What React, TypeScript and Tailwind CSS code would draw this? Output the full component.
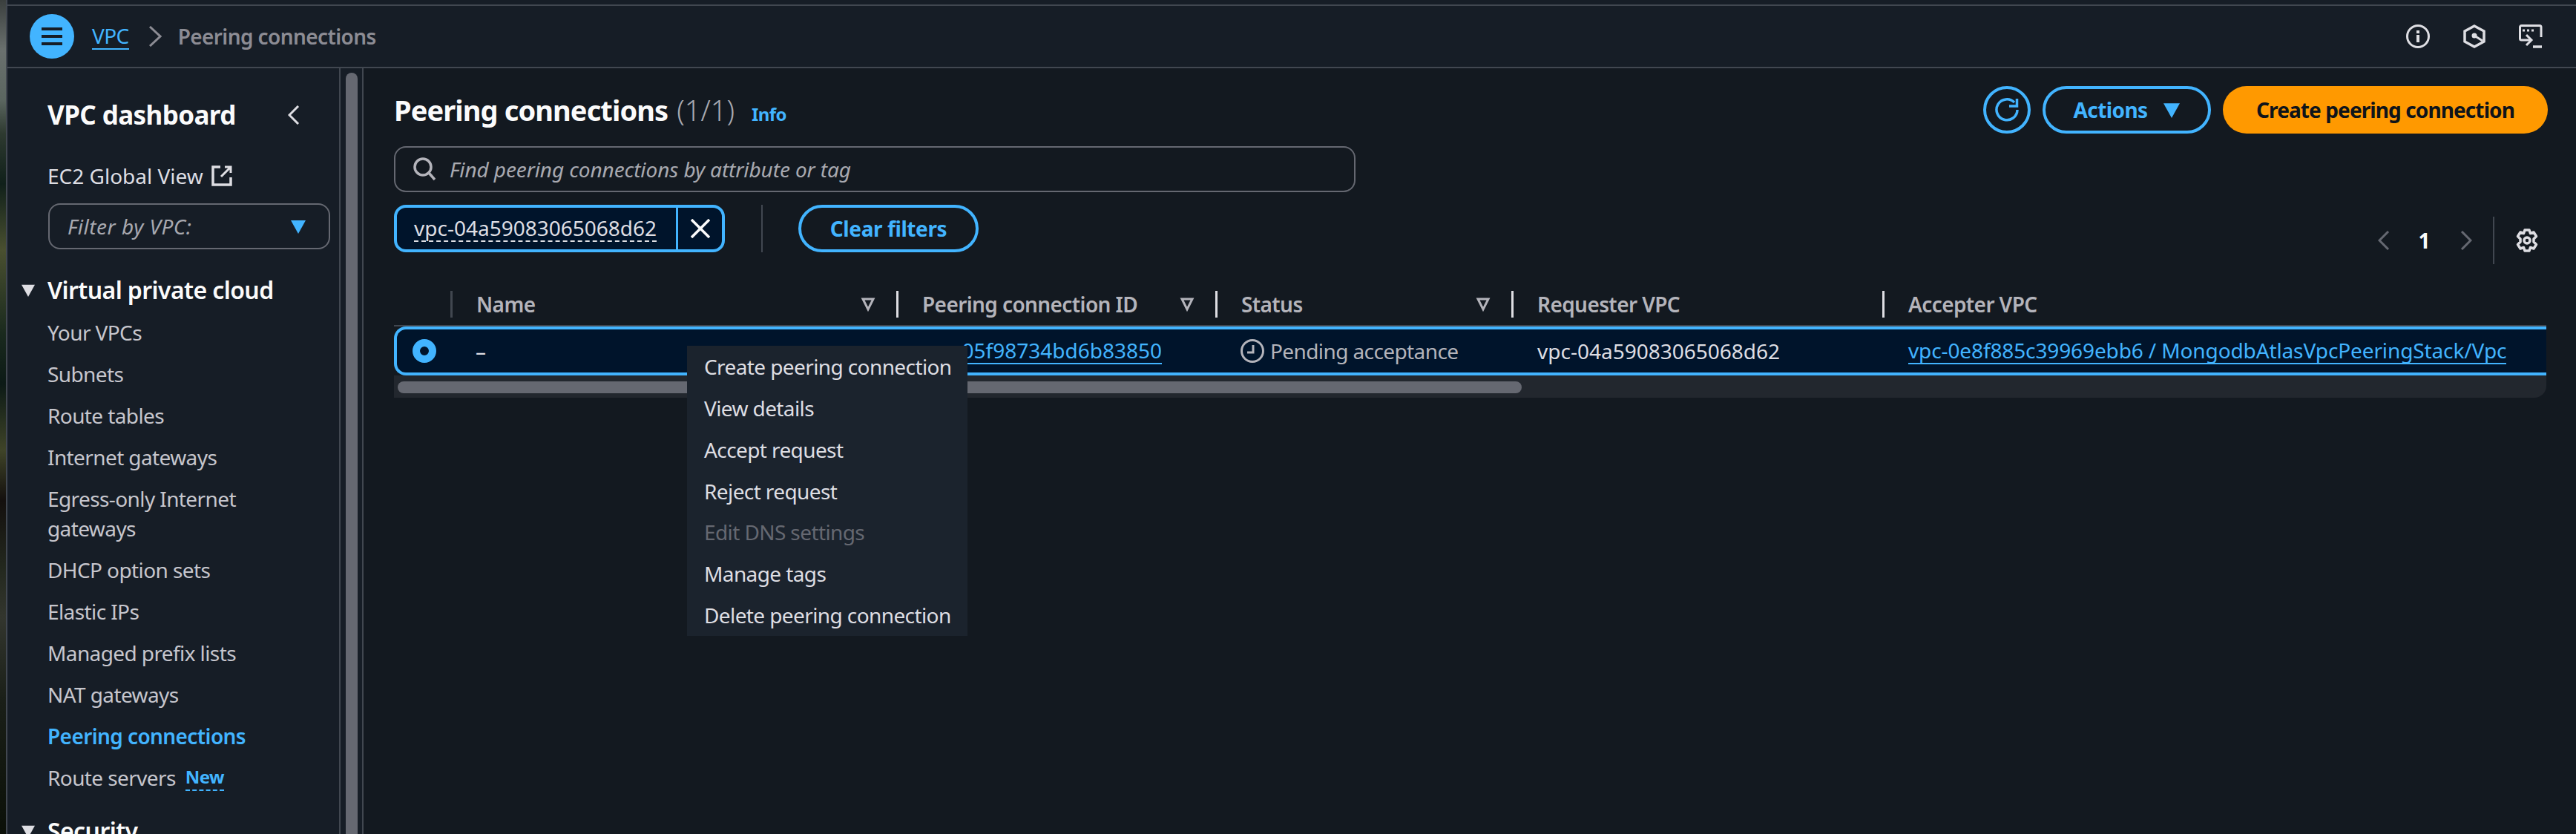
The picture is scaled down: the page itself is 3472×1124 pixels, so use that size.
const navItems = [
  "Your VPCs",
  "Subnets",
  "Route tables",
  "Internet gateways",
  "Egress-only Internet gateways",
  "DHCP option sets",
  "Elastic IPs",
  "Managed prefix lists",
  "NAT gateways",
];

const menuItems = [
  "Create peering connection",
  "View details",
  "Accept request",
  "Reject request",
  "Edit DNS settings",
  "Manage tags",
  "Delete peering connection",
];

function Caret({ className }: { className: string }) {
  return (
    <svg viewBox="0 0 20 20" className={className} fill="currentColor">
      <polygon points="0,2 20,2 10,20" />
    </svg>
  );
}

function FilterCaret() {
  return (
    <svg viewBox="0 0 20 22" className="h-[22px] w-[20px] text-[#b4b4bb]" fill="none" stroke="currentColor" strokeWidth="3">
      <polygon points="3,4 17,4 10,18" />
    </svg>
  );
}

function HeaderCell({ label, filter, bright }: { label?: string; filter?: boolean; bright?: boolean }) {
  return (
    <div className="flex h-[36px] items-center">
      <div className={`h-full ${bright ? "w-[3px] bg-[#dedee3]" : "w-[3px] bg-[#414750]"}`} />
      <span className="ml-[32px] flex-1 text-[28px] font-semibold text-[#b4b4bb]">{label}</span>
      {filter && (
        <div className="mr-[28px]">
          <FilterCaret />
        </div>
      )}
    </div>
  );
}

export default function App() {
  return (
    <div className="flex h-[1124px] w-[3472px] overflow-hidden bg-[#131920] font-['Noto_Sans',sans-serif] text-[28px] tracking-[-0.6px]">
      {/* desktop wallpaper peeking through at the window edge */}
      <div className="h-full w-[8px] shrink-0 bg-[linear-gradient(180deg,#3a3f3e_0%,#6a706e_6%,#5b6660_12%,#2e3a30_16%,#10201a_22%,#4a5030_30%,#1a2a1e_40%,#0c1a16_46%,#3f4428_54%,#14100e_60%,#23281e_68%,#33362e_74%,#1a1f18_84%,#0b1008_100%)]" />

      <div className="flex min-w-0 flex-1 flex-col border-l-2 border-[#414750]">
        <div className="h-[8px] shrink-0 border-b-2 border-[#414750] bg-[#161d26]" />

        {/* top bar */}
        <header className="flex h-[84px] shrink-0 items-center border-b-2 border-[#414750] bg-[#161d26] pl-[30px] pr-[45px]">
          <div className="flex h-[60px] w-[60px] items-center justify-center rounded-full bg-[#42b4ff]">
            <svg viewBox="0 0 28 24" className="h-[24px] w-[28px]" stroke="#161d26" strokeWidth="4">
              <path d="M0 2h28M0 12h28M0 22h28" />
            </svg>
          </div>
          <a className="ml-[24px] border-b-2 border-[#42b4ff] leading-[34px] text-[#42b4ff]">VPC</a>
          <svg viewBox="0 0 18 28" className="ml-[26px] h-[28px] w-[18px]" fill="none" stroke="#8c8c94" strokeWidth="3">
            <path d="M2 1l14 13L2 27" />
          </svg>
          <span className="ml-[22px] font-semibold text-[#8c8c94]">Peering connections</span>
          <div className="ml-auto flex items-center gap-[44px] text-[#dedee3]">
            <svg viewBox="0 0 32 32" className="h-[32px] w-[32px]" fill="none" stroke="currentColor" strokeWidth="3">
              <circle cx="16" cy="16" r="14.5" />
              <path d="M16 14v10" strokeWidth="4" />
              <path d="M16 8v4" strokeWidth="4" />
            </svg>
            <svg viewBox="0 0 32 32" className="h-[32px] w-[32px]" fill="none" stroke="currentColor" strokeWidth="3.5">
              <polygon points="16,2 29,9 29,23 16,30 3,23 3,9" />
              <circle cx="16" cy="15" r="3.5" fill="currentColor" stroke="none" />
              <path d="M16 15l11 7" strokeWidth="3" />
            </svg>
            <svg viewBox="0 0 32 32" className="h-[32px] w-[32px]" fill="none" stroke="currentColor" strokeWidth="3">
              <path d="M30 17V3.500a2 2 0 0 0-2-2H3.500a2 2 0 0 0-2 2V19a2 2 0 0 0 2 2H16" />
              <path d="M10 14l7 7-7 7" />
              <path d="M5 8h3M11 8h3M17 8h3" />
              <path d="M19 30h12" strokeWidth="3.500" />
            </svg>
          </div>
        </header>

        <div className="flex min-h-0 flex-1">
          {/* side navigation */}
          <aside className="relative h-[1100px] w-[449px] shrink-0 border-r-2 border-[#414750] bg-[#161d26] text-[#c6c6cd]">
            <div className="flex items-center pl-[54px] pr-[53px] pt-[41px]">
              <h2 className="flex-1 text-[35px] font-bold leading-[44px] text-[#fbfbfb]">VPC dashboard</h2>
              <svg viewBox="0 0 16 26" className="h-[26px] w-[16px]" fill="none" stroke="#dedee3" strokeWidth="3">
                <path d="M14 1L2 13l12 12" />
              </svg>
            </div>
            <div className="ml-[54px] mt-[40px] flex items-center gap-[11px] tracking-normal text-[#dedee3]">
              <span className="leading-[40px]">EC2 Global View</span>
              <svg viewBox="0 0 28 28" className="h-[28px] w-[28px]" fill="none" stroke="currentColor" strokeWidth="3.5">
                <path d="M12 2H2v24h24V16" />
                <path d="M18 2h8v8M26 2L13 15" strokeWidth="3" />
              </svg>
            </div>
            <div className="ml-[55px] mt-[17px] flex h-[62px] w-[380px] items-center justify-between rounded-[16px] border-2 border-[#656871] pl-[24px] pr-[31px]">
              <span className="italic tracking-[0.5px] text-[#a8a9b0]">Filter by VPC:</span>
              <Caret className="h-[22px] w-[20px] text-[#42b4ff]" />
            </div>
            <div className="relative ml-[54px] mt-[35px] flex items-center text-[32px] font-semibold leading-[40px] text-[#fbfbfb]">
              <Caret className="absolute -left-[36px] top-[11px] h-[18px] w-[20px] text-[#dedee3]" />
              Virtual private cloud
            </div>
            <nav className="ml-[54px] mt-[17px] flex w-[300px] flex-col gap-[16px] leading-[40px]">
              {navItems.map((item) => (
                <a key={item}>{item}</a>
              ))}
              <a className="font-semibold text-[#42b4ff]">Peering connections</a>
              <div className="flex items-center whitespace-nowrap">
                Route servers
                <span className="ml-[13px] border-b-2 border-dashed border-[#42b4ff] text-[24px] font-bold leading-[34px] text-[#42b4ff]">New</span>
              </div>
            </nav>
            <div className="relative ml-[54px] mt-[32px] flex items-center text-[32px] font-semibold leading-[40px] text-[#fbfbfb]">
              <Caret className="absolute -left-[36px] top-[11px] h-[18px] w-[20px] text-[#dedee3]" />
              Security
            </div>
          </aside>

          {/* scroll rail */}
          <div className="w-[29px] shrink-0 bg-[#161d26] pl-[7px] pt-[6px]">
            <div className="h-full w-[16px] rounded-t-[8px] bg-[#656871]" />
          </div>

          {/* content */}
          <main className="min-w-0 flex-1 border-l-2 border-[#414750] pl-[41px] pr-[38px] pt-[24px]">
            <div className="flex h-[64px] items-center justify-between">
              <div className="flex items-baseline">
                <h1 className="text-[38px] font-bold tracking-[-0.9px] text-[#fbfbfb]">Peering connections</h1>
                <span className="ml-[12px] text-[38px] font-light tracking-normal text-[#a8a9b0]">(1/1)</span>
                <span className="ml-[23px] text-[24px] font-bold text-[#42b4ff]">Info</span>
              </div>
              <div className="flex gap-[16px] font-bold">
                <div className="flex h-[64px] w-[64px] items-center justify-center rounded-full border-[4px] border-[#42b4ff]">
                  <svg viewBox="0 0 32 32" className="h-[32px] w-[32px]" fill="none" stroke="#42b4ff" strokeWidth="3.5">
                    <path d="M26 6A14 14 0 1 0 30 16" />
                    <path d="M29.500 1v10H19" />
                  </svg>
                </div>
                <button className="flex h-[64px] w-[227px] items-center justify-center gap-[22px] rounded-full border-[4px] border-[#42b4ff] text-[#42b4ff]">
                  Actions
                  <Caret className="h-[24px] w-[22px]" />
                </button>
                <button className="h-[64px] w-[438px] rounded-full bg-[#ff9900] tracking-[-0.9px] text-[#0f141a]">Create peering connection</button>
              </div>
            </div>

            <div className="mt-[17px] flex h-[62px] w-[1296px] items-center rounded-[16px] border-2 border-[#656871] pl-[24px]">
              <svg viewBox="0 0 30 32" className="h-[32px] w-[30px]" fill="none" stroke="#b4b4bb" strokeWidth="3.5">
                <circle cx="13" cy="13" r="11" />
                <path d="M21 21l8 9" />
              </svg>
              <span className="ml-[19px] italic tracking-[-0.1px] text-[#a8a9b0]">Find peering connections by attribute or tag</span>
            </div>

            <div className="mt-[17px] flex h-[80px] items-start">
              <div className="flex h-[64px] w-[446px] items-stretch rounded-[16px] border-[4px] border-[#42b4ff] bg-[#00142b]">
                <span className="flex flex-1 items-center pl-[23px]">
                  <span className="border-b-2 border-dashed border-[#dedee3] leading-[34px] tracking-normal text-[#dedee3]">vpc-04a59083065068d62</span>
                </span>
                <div className="flex w-[62px] items-center justify-center border-l-[3px] border-[#42b4ff]">
                  <svg viewBox="0 0 26 26" className="h-[26px] w-[26px]" stroke="#fbfbfb" strokeWidth="3.5">
                    <path d="M1 1l24 24M25 1L1 25" />
                  </svg>
                </div>
              </div>
              <div className="ml-[49px] h-[64px] w-[2px] bg-[#414750]" />
              <button className="ml-[48px] h-[64px] w-[243px] rounded-full border-[4px] border-[#42b4ff] font-bold tracking-[-0.4px] text-[#42b4ff]">Clear filters</button>
              <div className="ml-auto mt-[16px] flex h-[64px] items-center pr-[12px]">
                <svg viewBox="0 0 16 26" className="h-[26px] w-[16px]" fill="none" stroke="#656871" strokeWidth="3">
                  <path d="M14 1L2 13l12 12" />
                </svg>
                <span className="ml-[39px] font-bold text-[#fbfbfb]">1</span>
                <svg viewBox="0 0 16 26" className="ml-[41px] h-[26px] w-[16px]" fill="none" stroke="#656871" strokeWidth="3">
                  <path d="M2 1l12 12L2 25" />
                </svg>
                <div className="ml-[28px] h-[64px] w-[2px] bg-[#414750]" />
                <svg viewBox="0 0 32 32" className="ml-[28px] h-[32px] w-[32px]" fill="none" stroke="#dedee3" strokeWidth="3.5">
                  <path d="M13 2h6l1.5 4.5 4.5-1.5 3.5 5.5L25 14v4l3.5 3.5L25 27l-4.5-1.5L19 30h-6l-1.5-4.5L7 27l-3.5-5.5L7 18v-4L3.5 10.500 7 5l4.500 1.500z" strokeLinejoin="round" />
                  <circle cx="16" cy="16" r="4" />
                </svg>
              </div>
            </div>

            {/* table */}
            <div className="mt-[36px] grid grid-cols-[77px_600px_430px_399px_500px_1fr]">
              <div />
              <div className="-ml-px"><HeaderCell label="Name" filter /></div>
              <HeaderCell label="Peering connection ID" filter bright />
              <HeaderCell label="Status" filter bright />
              <HeaderCell label="Requester VPC" bright />
              <HeaderCell label="Accepter VPC" bright />
            </div>
            <div className="relative mt-[10px] w-[2901px]">
              <div className="h-[2px] bg-[#414750]" />
              <div className="grid h-[66px] grid-cols-[73px_600px_430px_399px_500px_1fr] items-center rounded-l-[16px] border-y-[4px] border-l-[4px] border-[#42b4ff] bg-[#00142b]">
                <div className="pl-[21px]">
                  <div className="h-[32px] w-[32px] rounded-full border-[10px] border-[#42b4ff] bg-[#00142b]" />
                </div>
                <span className="pl-[33px] text-[#dedee3]">–</span>
                <a className="ml-[34px] justify-self-start border-b-2 border-[#42b4ff] leading-[34px] tracking-normal text-[#42b4ff]">pcx-05f98734bd6b83850</a>
                <div className="flex items-center gap-[8px] pl-[34px] text-[#b4b4bb]">
                  <svg viewBox="0 0 32 32" className="h-[32px] w-[32px]" fill="none" stroke="currentColor" strokeWidth="3">
                    <circle cx="16" cy="16" r="14.500" />
                    <path d="M17 8v10h-8" />
                  </svg>
                  Pending acceptance
                </div>
                <span className="pl-[35px] tracking-normal text-[#dedee3]">vpc-04a59083065068d62</span>
                <a className="ml-[35px] justify-self-start whitespace-nowrap border-b-2 border-[#42b4ff] leading-[34px] tracking-[-0.12px] text-[#42b4ff]">vpc-0e8f885c39969ebb6 / MongodbAtlasVpcPeeringStack/Vpc</a>
              </div>
              <div className="h-[30px] rounded-br-[16px] bg-[#22272e] pl-[5px] pt-[8px]">
                <div className="h-[16px] w-[1515px] rounded-[8px] bg-[#656871]" />
              </div>

              {/* context menu */}
              <div className="absolute left-[395px] top-[28px] flex h-[391px] w-[378px] flex-col justify-center bg-[#1b232d] pl-[23px] text-[#dedee3]">
                {menuItems.map((item) => (
                  <div key={item} className={`flex h-[56px] items-center ${item === "Edit DNS settings" ? "text-[#656871]" : ""}`}>
                    {item}
                  </div>
                ))}
              </div>
            </div>
          </main>
        </div>
      </div>
    </div>
  );
}
